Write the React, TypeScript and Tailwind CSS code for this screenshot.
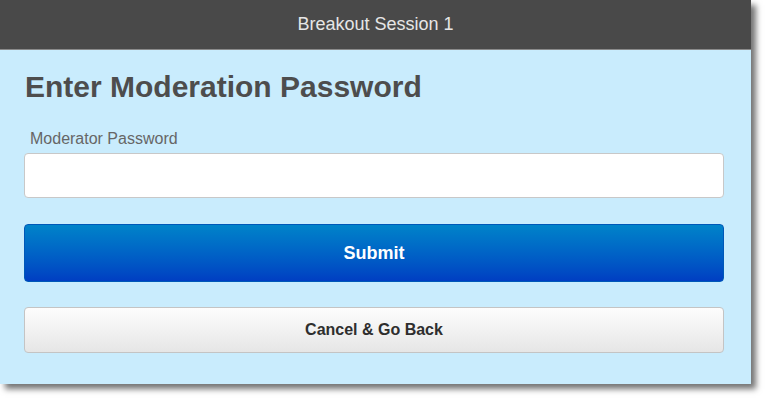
import React from 'react';

export default function App() {
  return (
    <div className="w-[769px] h-[403px] bg-white font-['Liberation_Sans',Arial,sans-serif]">
      <div className="w-[751px] h-[384px] flex flex-col bg-[#c9ecfd] shadow-[5px_5px_6px_rgba(0,0,0,0.55)]">
        {/* Header */}
        <div className="h-[50px] shrink-0 flex items-center justify-center bg-[#494949] border-b border-[#8a8a8a] text-[18px] text-[#e6e6e6]">
          Breakout Session 1
        </div>

        <div className="flex flex-col px-[24px] pr-[27px]">
          <h1 className="mt-[19px] ml-[1px] text-[30px] leading-[36px] font-bold text-[#4d4d4d]">
            Enter Moderation Password
          </h1>

          <label className="mt-[25px] ml-[6px] text-[16px] leading-[18px] text-[#666]">
            Moderator Password
          </label>
          <input
            type="password"
            className="mt-[5px] h-[45px] w-full rounded-[4px] border border-[#c8c8c8] bg-white px-3 outline-none"
          />

          <button className="mt-[26px] h-[58px] w-full rounded-[4px] border border-[#0058b8] bg-gradient-to-b from-[#0083c9] to-[#003ec2] text-[18px] font-bold text-white">
            Submit
          </button>

          <button className="mt-[25px] h-[46px] w-full rounded-[4px] border border-[#c4c4c4] bg-gradient-to-b from-[#fdfdfd] to-[#e6e6e6] text-[16px] font-bold text-[#2e2e2e]">
            Cancel &amp; Go Back
          </button>
        </div>
      </div>
    </div>
  );
}
